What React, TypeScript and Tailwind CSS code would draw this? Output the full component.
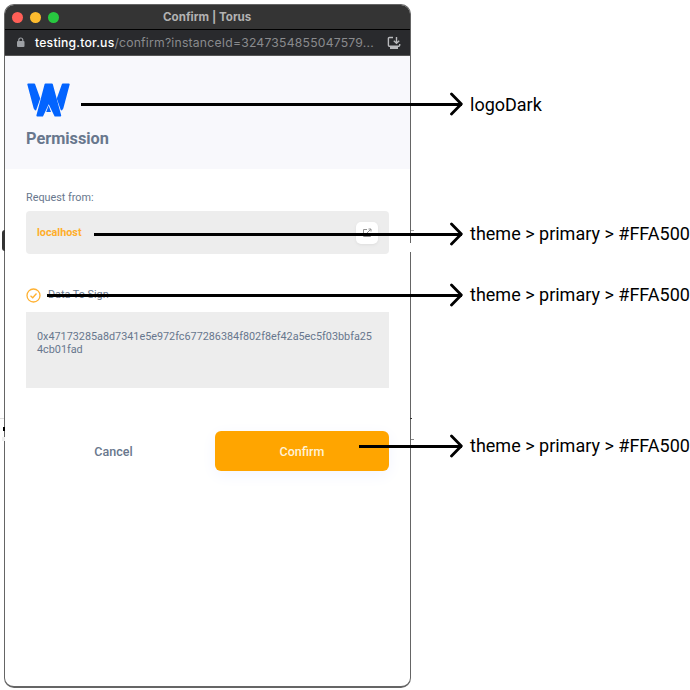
import React from 'react';

function Logo() {
  return (
    <svg className="block h-[34px] w-[43px]" viewBox="0 0 43 34">
      <g fill="#0364ff" stroke="#0364ff" strokeWidth="1.8" strokeLinejoin="round">
        <path d="M1.2 1.3H7.2L12.3 15.5L8.5 26.5L7.5 25Z" />
        <path d="M41.8 1.3H35.8L30.7 15.5L34.5 26.5L35.5 25Z" />
        <path d="M18.5 1.3H24.9L33.3 32.6H28.2L21.7 19L15.4 32.6H10.3Z" />
      </g>
      <path d="M21.6 22.5L24 29H19.2Z" fill="#0364ff" />
    </svg>
  );
}

function Note({ text, line }: { text: string; line: string }) {
  return (
    <div className="flex h-6 items-center justify-end">
      <div className={`relative h-[3px] bg-black ${line}`}>
        <svg className="absolute -top-[10.5px] -right-[1px] h-6 w-[13px]" viewBox="0 0 13 24">
          <path d="M1.5 2L11.3 12L1.5 22" fill="none" stroke="black" strokeWidth="2.8" strokeLinecap="round" strokeLinejoin="round" />
        </svg>
      </div>
      <span className="ml-2 w-[220px] shrink-0 whitespace-nowrap text-[18px] leading-6 text-black">{text}</span>
    </div>
  );
}

export default function App() {
  return (
    <div className="relative h-[690px] w-[690px] overflow-hidden bg-white font-[Roboto,sans-serif]">
      <div className="absolute top-[230px] left-[2px] h-[21px] w-[3px] rounded-l-[3px] bg-[#333]" />
      <main className="ml-[4px] pt-[4px]">
        <section className="flex h-[684px] w-[407px] flex-col overflow-hidden rounded-[10px] border border-b-2 border-[#656565] bg-white">
          <header className="relative flex h-[25px] shrink-0 items-center border-b border-black bg-[#343434] pl-[7px]">
            <div className="flex gap-[7px]">
              <i className="size-[11px] rounded-full bg-[#ff5f57]" />
              <i className="size-[11px] rounded-full bg-[#febc2e]" />
              <i className="size-[11px] rounded-full bg-[#28c840]" />
            </div>
            <span className="ml-[104px] pt-[2px] whitespace-nowrap font-[Inter,sans-serif] text-[11.6px] font-bold text-[#b2b2b2]">Confirm | Torus</span>
          </header>
          <div className="flex h-[26px] shrink-0 items-center border-b border-[#555] bg-[#292a2d] pl-[11px]">
            <svg className="h-[11px] w-[9px]" viewBox="0 0 9 11">
              <rect x="1" y="4" width="7.5" height="6" rx="1" fill="#9da0a5" />
              <path d="M2.8 5V3a2 2 0 0 1 4 0v2" fill="none" stroke="#9da0a5" strokeWidth="1.2" />
            </svg>
            <span className="ml-[10px] w-[344px] pt-px whitespace-nowrap font-[Inter,sans-serif] text-[12.2px] tracking-[0.21px] text-[#898a8d]"><span className="font-medium text-white">testing.tor.us</span>/confirm?instanceId=3247354855047579...</span>
            <svg className="ml-[8px] size-[14px] shrink-0" viewBox="0 0 14 14" fill="none" stroke="#b9babd" strokeWidth="1.4">
              <path d="M6 1.5H2.4Q1.4 1.5 1.4 2.5V9.3Q1.4 10.3 2.4 10.3H11.7Q12.7 10.3 12.7 9.3V8M9.5 1V7M6.8 4.8L9.5 7.4L12.2 4.8" />
              <path d="M3 12H11" strokeWidth="2" />
            </svg>
          </div>
          <div className="h-[113px] shrink-0 bg-[#f8f8fc] pt-[27px] pl-[21px]">
            <div className="pl-[1px]"><Logo /></div>
            <h1 className="mt-[10px] text-[16.3px] leading-6 font-bold text-[#68778d]">Permission</h1>
          </div>
          <div className="flex flex-col px-[21px] pt-[21px] text-[#68778d]">
            <p className="text-[10.8px] leading-4">Request from:</p>
            <div className="mt-[5px] flex h-[43px] items-center justify-between rounded-[4px] bg-[#ededed] pr-[11px] pl-[11px] text-[10.8px] font-bold text-[#ffae2a]">
              <span className="pt-px">localhost</span>
              <div className="flex size-[22px] items-center justify-center rounded-[5px] bg-white shadow-[0_1px_3px_#dddddd]">
                <svg className="size-[10px]" viewBox="0 0 10 10" fill="none" stroke="#929292" strokeWidth="1">
                  <path d="M5 1.5H1.5V8.5H8.5V5M6.5 1H9V3.5M9 1L4.5 5.5" />
                </svg>
              </div>
            </div>
            <div className="mt-[33px] flex h-[16px] items-center text-[10.8px]">
              <svg className="mr-[7px] size-[15px]" viewBox="0 0 15 15" fill="none" stroke="#ffb132" strokeWidth="1.3">
                <circle cx="7.5" cy="7.5" r="6.5" />
                <path d="M4.5 7.8L6.7 9.8L10.5 5.5" />
              </svg>
              Data To Sign
            </div>
            <div className="mt-[9px] h-[76px] bg-[#ededed] px-[11px] pt-[18px] text-[10.82px] leading-[13px]">
              <p className="whitespace-nowrap">0x47173285a8d7341e5e972fc677286384f802f8ef42a5ec5f03bbfa25<br />4cb01fad</p>
            </div>
            <div className="mt-[43px] flex h-[40px]">
              <button className="h-full w-[175px] pt-[2px] text-[12.5px] font-medium">Cancel</button>
              <button className="ml-[14px] h-full flex-1 rounded-[6px] bg-[#ffa500] pt-[2px] text-[12.5px] font-medium text-[#fff2d6] shadow-[0_4px_16px_#f2f4ff]">Confirm</button>
            </div>
          </div>
        </section>
      </main>
      {/* Small breaks in the window outline. */}
      <i className="absolute top-[243px] left-[410px] h-[9px] w-[1px] bg-white" />
      <i className="absolute top-[230px] left-[411px] h-[1px] w-[3px] bg-[#aaaaaa]" />
      <i className="absolute top-[418px] left-[410px] h-[1px] w-[2px] bg-[#333333]" />
      <i className="absolute top-[439px] left-[411px] h-[1px] w-[3px] bg-[#888888]" />
      <i className="absolute top-[418px] left-[0px] h-[1px] w-[4px] bg-[#dddddd]" />
      <i className="absolute top-[427px] left-[3px] h-[4px] w-[2px] bg-black" />
      <i className="absolute top-[437px] left-[2px] h-[4px] w-[3px] bg-[#eeeeee]" />
      {/* Callouts overlay the window and extend to their labels. */}
      <div className="pointer-events-none absolute top-[92px] left-0 w-[690px]">
        <div className="[&_span]:pt-[2px]"><Note text="logoDark" line="w-[381px]" /></div>
        <div className="mt-[106px]"><Note text="theme > primary > #FFA500" line="w-[368px]" /></div>
        <div className="mt-[37px]"><Note text="theme > primary > #FFA500" line="w-[415px]" /></div>
        <div className="mt-[127px]"><Note text="theme > primary > #FFA500" line="w-[103px]" /></div>
      </div>
    </div>
  );
}
